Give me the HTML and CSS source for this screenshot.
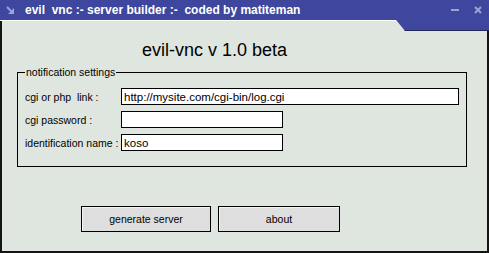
FILE: index.html
```html
<!DOCTYPE html>
<html lang="en">
<head>
    <meta charset="UTF-8">
    <title>evil vnc :- server builder</title>
    <link rel="stylesheet" href="styles.css">
</head>
<body>
    <div class="window">
        <div class="titlebar">
            <svg class="app-icon" width="9" height="9" viewBox="0 0 9 9">
                <path d="M1 1 L6 6" stroke="#9aa3d2" stroke-width="2"/>
                <path d="M2 8 L8 8 L8 2 Z" fill="#9aa3d2"/>
            </svg>
            <span class="title">evil  vnc :- server builder :-  coded by matiteman</span>
            <span class="controls">
                <span class="btn-min"></span>
                <svg class="btn-close" width="8" height="8" viewBox="0 0 8 8">
                    <path d="M1 1 L7 7 M7 1 L1 7" stroke="#9aa3d2" stroke-width="2"/>
                </svg>
            </span>
        </div>
        <div class="content">
            <h1 class="heading">evil-vnc v 1.0 beta</h1>
            <fieldset class="settings">
                <legend>notification settings</legend>
                <div class="row">
                    <label for="link">cgi or php  link :</label>
                    <input type="text" id="link" class="wide" value="http://mysite.com/cgi-bin/log.cgi">
                </div>
                <div class="row">
                    <label for="pass">cgi password :</label>
                    <input type="text" id="pass" class="short" value="">
                </div>
                <div class="row">
                    <label for="ident">identification name :</label>
                    <input type="text" id="ident" class="short" value="koso">
                </div>
            </fieldset>
            <div class="actions">
                <button class="btn gen">generate server</button>
                <button class="btn about">about</button>
            </div>
        </div>
    </div>
</body>
</html>
```

FILE: styles.css
```css
/* Global */
* {
    box-sizing: border-box;
}

body {
    margin: 0;
    font-family: 'Liberation Sans', Arial, sans-serif;
    background: #dfe6df;
}

/* Window frame */
.window {
    width: 489px;
    height: 253px;
    display: flex;
    flex-direction: column;
}

.titlebar {
    position: relative;
    height: 21px;
    background: #3e479d;
    border-bottom: 1px solid #ffffff;
    display: flex;
    align-items: center;
    padding-left: 6px;
}

/* skin tab under the window buttons */
.titlebar::before,
.titlebar::after {
    content: "";
    position: absolute;
    top: 20px;
    right: 0;
    height: 10px;
}

.titlebar::before {
    left: 395px;
    background: #ffffff;
    clip-path: polygon(0 0, 100% 0, 100% 100%, 9px 100%);
}

.titlebar::after {
    left: 396px;
    height: 10px;
    background: #3e479d;
    border-bottom: 1px solid #23285a;
    clip-path: polygon(0 0, 100% 0, 100% 100%, 9px 100%);
}

.app-icon {
    margin-top: 1px;
}

.title {
    white-space: pre;
    color: #ffffff;
    font-weight: bold;
    font-size: 12px;
    margin-left: 10px;
}

.controls {
    margin-left: auto;
    display: flex;
    align-items: center;
    gap: 15px;
    padding-right: 7px;
}

.btn-min {
    display: block;
    width: 8px;
    height: 2px;
    background: #9aa3d2;
}

.btn-close {
    display: block;
}

/* Body */
.content {
    flex: 1;
    background: #dfe6df;
    border: 2px solid #141414;
    border-top: none;
    font-size: 10.5px;
}

.heading {
    margin: 19px 0 6px 140px;
    font-size: 18px;
    line-height: 20px;
    font-weight: normal;
    color: #000;
}

/* Fieldset */
.settings {
    margin: 0 0 0 15px;
    width: 450px;
    border: 1px solid #000;
    padding: 10px 0 15px 7px;
}

.settings legend {
    padding: 0 1px 0 1px;
    margin-left: 0;
    line-height: 12px;
}

.row {
    display: flex;
    align-items: center;
    height: 17px;
    margin-bottom: 6px;
}

.row:last-child {
    margin-bottom: 0;
}

.row label {
    width: 96px;
    white-space: pre;
}

.row input {
    height: 17px;
    border: 1px solid #000;
    background: #fff;
    font-family: 'Liberation Sans', Arial, sans-serif;
    font-size: 11.5px;
    padding: 0 2px;
    outline: none;
}

.wide {
    width: 338px;
}

.short {
    width: 162px;
}

/* Buttons */
.actions {
    display: flex;
    gap: 7px;
    margin: 39px 0 0 79px;
}

.btn {
    height: 26px;
    border: 1px solid #000;
    background: #dedede;
    box-shadow: inset 1px 1px 0 #f4f4f4;
    font-family: 'Liberation Sans', Arial, sans-serif;
    font-size: 10.5px;
    color: #000;
    padding: 0;
}

.gen {
    width: 130px;
}

.about {
    width: 122px;
}
```
